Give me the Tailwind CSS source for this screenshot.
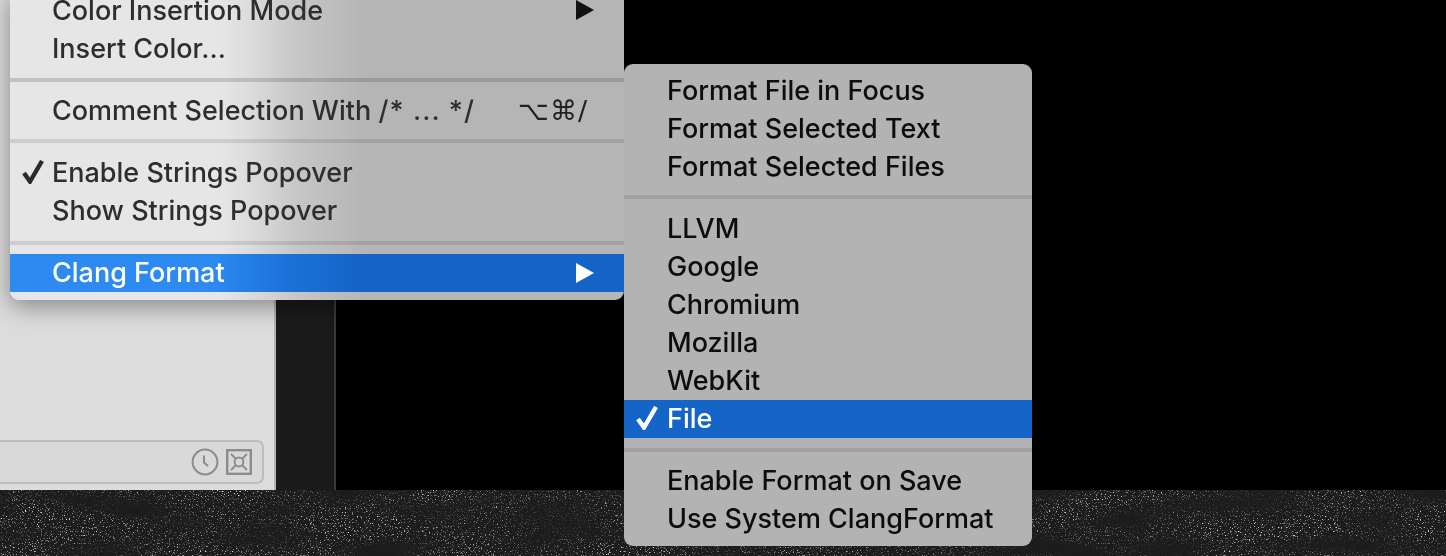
<!DOCTYPE html>
<html lang="en">
<head>
<meta charset="utf-8">
<title>Clang Format menu</title>
<script src="https://cdn.jsdelivr.net/npm/@tailwindcss/browser@4"></script>
</head>
<body class="bg-black">
<div class="relative w-[1446px] h-[556px] overflow-hidden font-['Inter','Roboto',sans-serif] text-[27px] font-[450] blur-[0.35px]">
  <div class="flex h-[490px]">
    <div class="w-[276px] h-full bg-[#dcdcdc] border-r-2 border-[#b4b4b4] flex flex-col justify-end pb-[6px]">
      <div class="h-[44px] w-[264px] border-2 border-l-0 border-[#bdbdbd] rounded-r-[7px] bg-[#d9d9d9] flex items-center justify-end gap-[7px] pr-[10px]">
        <svg width="28" height="28" viewBox="0 0 28 28" fill="none" stroke="#8c8c8c" stroke-width="2"><circle cx="14" cy="14" r="12.4"/><path d="M13 7.5v7l4 3.5"/></svg>
        <svg width="26" height="26" viewBox="0 0 26 26" fill="none" stroke="#8c8c8c"><rect x="1.2" y="1.2" width="23.6" height="23.6" stroke-width="2.4"/><circle cx="13" cy="13" r="4.4" stroke-width="2"/><path d="M5 5l5 5M21 5l-5 5M5 21l5-5M21 21l-5-5" stroke-width="1.8"/></svg>
      </div>
    </div>
    <div class="w-[60px] h-full bg-[#1a1a1a] border-r-2 border-[#3a3a3a]"></div>
    <div class="flex-1 bg-black"></div>
  </div>
  <div class="relative h-[66px] bg-[#1c1c1c] overflow-hidden">
    <svg class="absolute inset-0" width="1446" height="66">
      <filter id="speck" x="0" y="0" width="100%" height="100%">
        <feTurbulence type="fractalNoise" baseFrequency="0.75" numOctaves="2" seed="7" result="fine"/>
        <feColorMatrix in="fine" type="matrix" values="0 0 0 0 0.72  0 0 0 0 0.72  0 0 0 0 0.72  5 0 0 0 -2.95" result="dots"/>
        <feTurbulence type="fractalNoise" baseFrequency="0.01 0.04" numOctaves="2" seed="3" result="coarse"/>
        <feColorMatrix in="coarse" type="matrix" values="0 0 0 0 1  0 0 0 0 1  0 0 0 0 1  2.4 0 0 0 -0.6" result="mask"/>
        <feComposite in="dots" in2="mask" operator="in"/>
      </filter>
      <rect width="1446" height="66" filter="url(#speck)"/>
      <path d="M91 513l7 2 2 4-5-2z" fill="#bbbbbb"/>
    </svg>
  </div>

  <!-- main menu -->
  <div class="absolute left-[10px] top-[-9px] w-[614px] h-[309px] rounded-b-[9px] text-[#2e2e2e] bg-[linear-gradient(to_right,#e6e6e6_34%,#dcdcdc_39%,#c6c6c6_47%,#b5b5b5_58%)] shadow-[0_6px_24px_rgba(0,0,0,0.4)]">
    <div class="h-[38px] pl-[42px] pr-[30px] pt-[2px] flex items-center justify-between">
      <span>Color Insertion Mode</span>
      <svg class="-mt-[2px]" width="18" height="20" viewBox="0 0 18 20" fill="#111"><path d="M0 0l18 10L0 20z"/></svg>
    </div>
    <div class="h-[38px] pl-[42px] pt-[2px] flex items-center">Insert Color...</div>
    <div class="h-[24px] flex items-center pt-[2px]"><div class="h-[4px] w-full bg-black/15"></div></div>
    <div class="h-[38px] pl-[42px] pr-[36px] pt-[2px] flex items-center justify-between">
      <span>Comment Selection With <span class="tracking-[1.1px]">/* ... */</span></span>
      <span class="font-['DejaVu_Sans',sans-serif] font-normal text-[#222] text-[27px] tracking-[1px]">⌥⌘/</span>
    </div>
    <div class="h-[24px] flex items-center"><div class="h-[4px] w-full bg-black/10"></div></div>
    <div class="relative h-[38px] pl-[42px] pt-[2px] flex items-center">
      <svg class="absolute left-[12px] top-[7px]" width="22" height="24" viewBox="0 0 22 24" fill="none" stroke="#2a2a2a" stroke-width="4.4"><path d="M2 13l6 8.5L20 1"/></svg>
      Enable Strings Popover
    </div>
    <div class="h-[38px] pl-[42px] pt-[2px] flex items-center">Show Strings Popover</div>
    <div class="h-[25px] flex items-center pt-[2px]"><div class="h-[4px] w-full bg-black/10"></div></div>
    <div class="h-[38px] pl-[42px] pr-[30px] flex items-center justify-between text-white bg-[linear-gradient(to_right,#2c8af0_33%,#1c72d8_45%,#1565c8_56%)]">
      <span>Clang Format</span>
      <svg width="18" height="20" viewBox="0 0 18 20" fill="#fff"><path d="M0 0l18 10L0 20z"/></svg>
    </div>
  </div>

  <!-- submenu -->
  <div class="absolute left-[624px] top-[64px] w-[408px] h-[482px] rounded-[9px] bg-[#b3b3b3] text-[#0d0d0d] pt-[7px]">
    <div class="h-[38px] pl-[43px] pt-[2px] flex items-center">Format File in Focus</div>
    <div class="h-[38px] pl-[43px] pt-[2px] flex items-center">Format Selected Text</div>
    <div class="h-[38px] pl-[43px] pt-[2px] flex items-center">Format Selected Files</div>
    <div class="h-[24px] flex items-center"><div class="h-[4px] w-full bg-black/10"></div></div>
    <div class="h-[38px] pl-[43px] pt-[2px] flex items-center">LLVM</div>
    <div class="h-[38px] pl-[43px] pt-[2px] flex items-center">Google</div>
    <div class="h-[38px] pl-[43px] pt-[2px] flex items-center">Chromium</div>
    <div class="h-[38px] pl-[43px] pt-[2px] flex items-center">Mozilla</div>
    <div class="h-[39px] pl-[43px] pt-[1px] flex items-center">WebKit</div>
    <div class="relative h-[38px] pl-[43px] flex items-center bg-[#1565c8] text-white">
      <svg class="absolute left-[12px] top-[6px]" width="22" height="24" viewBox="0 0 22 24" fill="none" stroke="#fff" stroke-width="4.4"><path d="M2 13l6 8.5L20 1"/></svg>
      File
    </div>
    <div class="h-[23px] flex items-center"><div class="h-[4px] w-full bg-black/10"></div></div>
    <div class="h-[38px] pl-[43px] pt-[2px] flex items-center">Enable Format on Save</div>
    <div class="h-[38px] pl-[43px] pt-[2px] flex items-center">Use System ClangFormat</div>
  </div>
</div>
</body>
</html>
